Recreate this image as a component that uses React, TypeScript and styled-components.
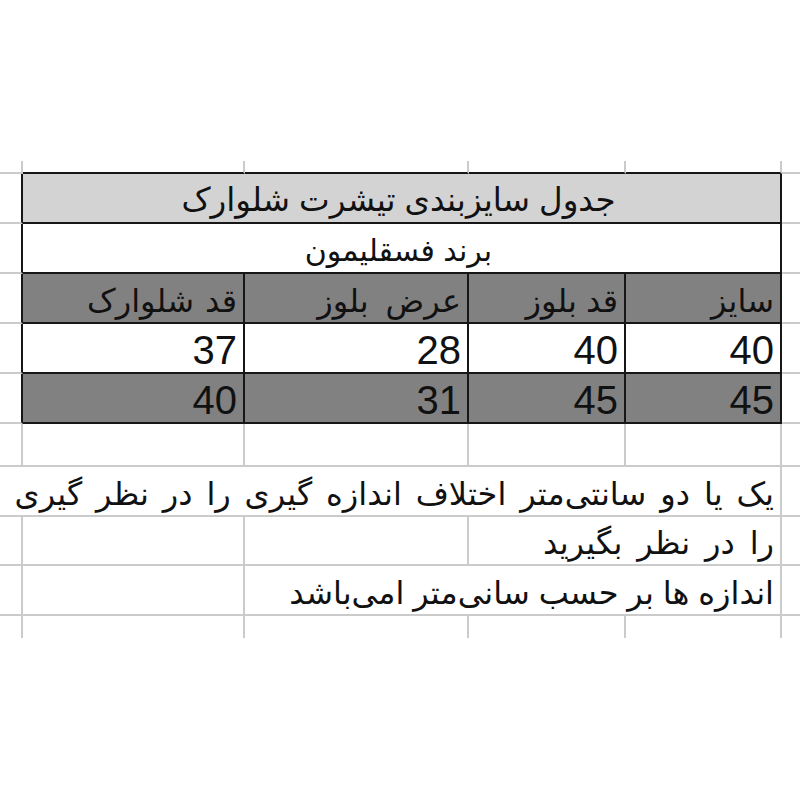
import React from 'react'
import styled, { createGlobalStyle } from 'styled-components'

const GlobalStyle = createGlobalStyle`
  html, body {
    margin: 0;
    padding: 0;
    background: #fff;
  }
  body {
    font-family: "Liberation Sans", "DejaVu Sans", sans-serif;
    color: #111;
  }
`

// sheet columns, left to right on screen (the sheet itself reads right to left)
const COLUMNS = '23px 222px 224px 157px 156px 18px'

type Line = 'grid' | 'ink' | 'none'

const line = (l: Line = 'grid') =>
  l === 'ink' ? '2px solid #161616' : l === 'grid' ? '2px solid #cbcbcb' : 'none'

const Page = styled.main`
  width: 800px;
  padding-top: 161px;
`

const Sheet = styled.div`
  display: flex;
  flex-direction: column;
`

const SheetRow = styled.div<{ $h: number }>`
  display: grid;
  grid-template-columns: ${COLUMNS};
  height: ${p => p.$h}px;
`

const Cell = styled.div<{
  $span?: number
  $right?: Line
  $bottom?: Line
  $fill?: string
  $center?: boolean
}>`
  grid-column: span ${p => p.$span ?? 1};
  box-sizing: border-box;
  min-width: 0;
  border-right: ${p => line(p.$right)};
  border-bottom: ${p => line(p.$bottom)};
  background: ${p => p.$fill ?? '#fff'};
  display: flex;
  align-items: center;
  justify-content: ${p => (p.$center ? 'center' : 'flex-end')};
  padding: 0 6px 0 0;
`

const Persian = styled.span<{ $size?: number; $spacing?: number }>`
  direction: rtl;
  unicode-bidi: isolate;
  white-space: nowrap;
  font-size: ${p => p.$size ?? 32}px;
  word-spacing: ${p => p.$spacing ?? 0}px;
  line-height: 1;
  padding-top: 5px;
`

const Figure = styled.span`
  font-size: 40px;
  line-height: 1;
  padding-top: 4px;
`

const LIGHT = '#d3d3d3'
const DARK = '#818181'

const headers = [
  { text: 'قد شلوارک', spacing: 2 },
  { text: 'عرض بلوز', spacing: 8 },
  { text: 'قد بلوز', spacing: 0 },
  { text: 'سایز', spacing: 0 },
]
const rows = [
  { fill: '#fff', values: ['37', '28', '40', '40'] },
  { fill: DARK, values: ['40', '31', '45', '45'] },
]

export default function App() {
  return (
    <Page>
      <GlobalStyle />
      <Sheet>
        <SheetRow $h={13}>
          <Cell />
          <Cell $bottom="ink" />
          <Cell $bottom="ink" />
          <Cell $bottom="ink" />
          <Cell $bottom="ink" />
          <Cell $right="none" />
        </SheetRow>

        <SheetRow $h={50}>
          <Cell $right="ink" />
          <Cell $span={4} $center $fill={LIGHT} $right="ink" $bottom="ink">
            <Persian $size={32.5}>جدول سایزبندی تیشرت شلوارک</Persian>
          </Cell>
          <Cell $right="none" />
        </SheetRow>

        <SheetRow $h={50}>
          <Cell $right="ink" />
          <Cell $span={4} $center $right="ink" $bottom="ink">
            <Persian $size={30}>برند فسقلیمون</Persian>
          </Cell>
          <Cell $right="none" />
        </SheetRow>

        <SheetRow $h={50}>
          <Cell $right="ink" />
          {headers.map(h => (
            <Cell key={h.text} $fill={DARK} $right="ink" $bottom="ink">
              <Persian $spacing={h.spacing}>{h.text}</Persian>
            </Cell>
          ))}
          <Cell $right="none" />
        </SheetRow>

        {rows.map((r, i) => (
          <SheetRow key={i} $h={50}>
            <Cell $right="ink" />
            {r.values.map((v, j) => (
              <Cell key={j} $fill={r.fill} $right="ink" $bottom="ink">
                <Figure>{v}</Figure>
              </Cell>
            ))}
            <Cell $right="none" />
          </SheetRow>
        ))}

        <SheetRow $h={43}>
          <Cell />
          <Cell />
          <Cell />
          <Cell />
          <Cell />
          <Cell $right="none" />
        </SheetRow>

        <SheetRow $h={50}>
          <Cell $span={5}>
            <Persian $spacing={5}>یک یا دو سانتی‌متر اختلاف اندازه گیری را در نظر گیری</Persian>
          </Cell>
          <Cell $right="none" />
        </SheetRow>

        <SheetRow $h={49}>
          <Cell />
          <Cell />
          <Cell />
          <Cell $span={2}>
            <Persian $spacing={6}>را در نظر بگیرید</Persian>
          </Cell>
          <Cell $right="none" />
        </SheetRow>

        <SheetRow $h={50}>
          <Cell />
          <Cell />
          <Cell $span={3}>
            <Persian>اندازه ها بر حسب سانی‌متر امی‌باشد</Persian>
          </Cell>
          <Cell $right="none" />
        </SheetRow>

        <SheetRow $h={22}>
          <Cell $bottom="none" />
          <Cell $bottom="none" />
          <Cell $bottom="none" />
          <Cell $bottom="none" />
          <Cell $bottom="none" />
          <Cell $right="none" $bottom="none" />
        </SheetRow>
      </Sheet>
    </Page>
  )
}
